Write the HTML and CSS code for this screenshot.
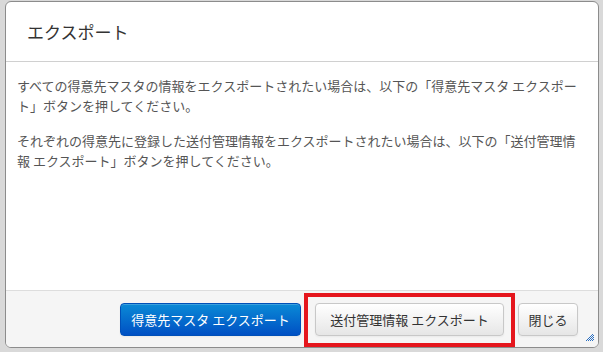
FILE: index.html
```html
<!DOCTYPE html>
<html lang="ja">
<head>
    <meta charset="UTF-8">
    <title>エクスポート</title>
    <link rel="stylesheet" href="styles.css">
</head>
<body>
    <div class="backdrop">
        <div class="modal">
            <div class="modal-header">
                <h3>エクスポート</h3>
            </div>
            <div class="modal-body">
                <p>すべての得意先マスタの情報をエクスポートされたい場合は、以下の「得意先マスタ エクスポー<br>ト」ボタンを押してください。</p>
                <p>それぞれの得意先に登録した送付管理情報をエクスポートされたい場合は、以下の「送付管理情報 エクスポート」ボタンを押してください。</p>
            </div>
            <div class="modal-footer">
                <button class="btn btn-primary">得意先マスタ エクスポート</button>
                <span class="highlight">
                    <button class="btn btn-send">送付管理情報 エクスポート</button>
                </span>
                <button class="btn btn-close">閉じる</button>
            </div>
            <svg class="grip" width="8" height="8" viewBox="0 0 8 8">
                <g fill="#2b6fc0">
                    <rect x="6" y="0" width="1" height="1"/>
                    <rect x="5" y="1" width="1" height="1"/><rect x="7" y="1" width="1" height="1"/>
                    <rect x="4" y="2" width="1" height="1"/><rect x="6" y="2" width="1" height="1"/>
                    <rect x="3" y="3" width="1" height="1"/><rect x="5" y="3" width="1" height="1"/><rect x="7" y="3" width="1" height="1"/>
                    <rect x="2" y="4" width="1" height="1"/><rect x="4" y="4" width="1" height="1"/><rect x="6" y="4" width="1" height="1"/>
                    <rect x="1" y="5" width="1" height="1"/><rect x="3" y="5" width="1" height="1"/><rect x="5" y="5" width="1" height="1"/><rect x="7" y="5" width="1" height="1"/>
                    <rect x="0" y="6" width="1" height="1"/><rect x="2" y="6" width="1" height="1"/><rect x="4" y="6" width="1" height="1"/><rect x="6" y="6" width="1" height="1"/>
                </g>
            </svg>
        </div>
    </div>
</body>
</html>
```

FILE: styles.css
```css
body {
    margin: 0;
    font-family: "Noto Sans CJK JP", "Liberation Sans", sans-serif;
    background: #d9d9d9;
}
.backdrop {
    width: 603px;
    height: 352px;
    padding: 1px 0 0 5px;
    box-sizing: border-box;
}
.modal {
    position: relative;
    width: 594px;
    height: 347px;
    box-sizing: border-box;
    background: #fff;
    border: 1px solid #8c8c8c;
    border-radius: 6px;
    display: flex;
    flex-direction: column;
    overflow: hidden;
}
.modal-header {
    height: 59px;
    padding: 0 21px;
    border-bottom: 1px solid #d0d0d0;
    display: flex;
    align-items: center;
}
.modal-header h3 {
    margin: 0;
    font-size: 17px;
    font-weight: normal;
    color: #333;
}
.modal-body {
    flex: 1;
    padding: 14px 16px 0 11px;
    font-size: 13px;
    line-height: 20px;
    color: #555;
}
.modal-body p {
    margin: 0 0 15px;
}
.modal-footer {
    height: 56px;
    border-top: 1px solid #ddd;
    background: #f5f5f5;
    display: flex;
    align-items: center;
    justify-content: flex-end;
    gap: 14px;
    padding: 0 20px 0 0;
}
.btn {
    height: 33px;
    padding: 0;
    font-family: inherit;
    font-size: 13px;
    color: #333;
    border: 1px solid #c8c8c8;
    border-radius: 4px;
    background: linear-gradient(#ffffff, #e6e6e6);
    box-shadow: inset 0 1px 0 rgba(255, 255, 255, 0.2), 0 1px 2px rgba(0, 0, 0, 0.05);
}
.btn-primary {
    width: 181px;
    color: #fff;
    border-color: #0050b8;
    background: linear-gradient(#0a8ad6, #0050c4);
}
.btn-send {
    width: 189px;
}
.btn-close {
    width: 60px;
}
.highlight {
    position: relative;
    display: flex;
}
.highlight::after {
    content: "";
    position: absolute;
    left: -11px;
    right: -11px;
    top: -10px;
    bottom: -11px;
    border: 4px solid #e5161d;
}
.grip {
    position: absolute;
    right: 4px;
    bottom: 5px;
}
```
